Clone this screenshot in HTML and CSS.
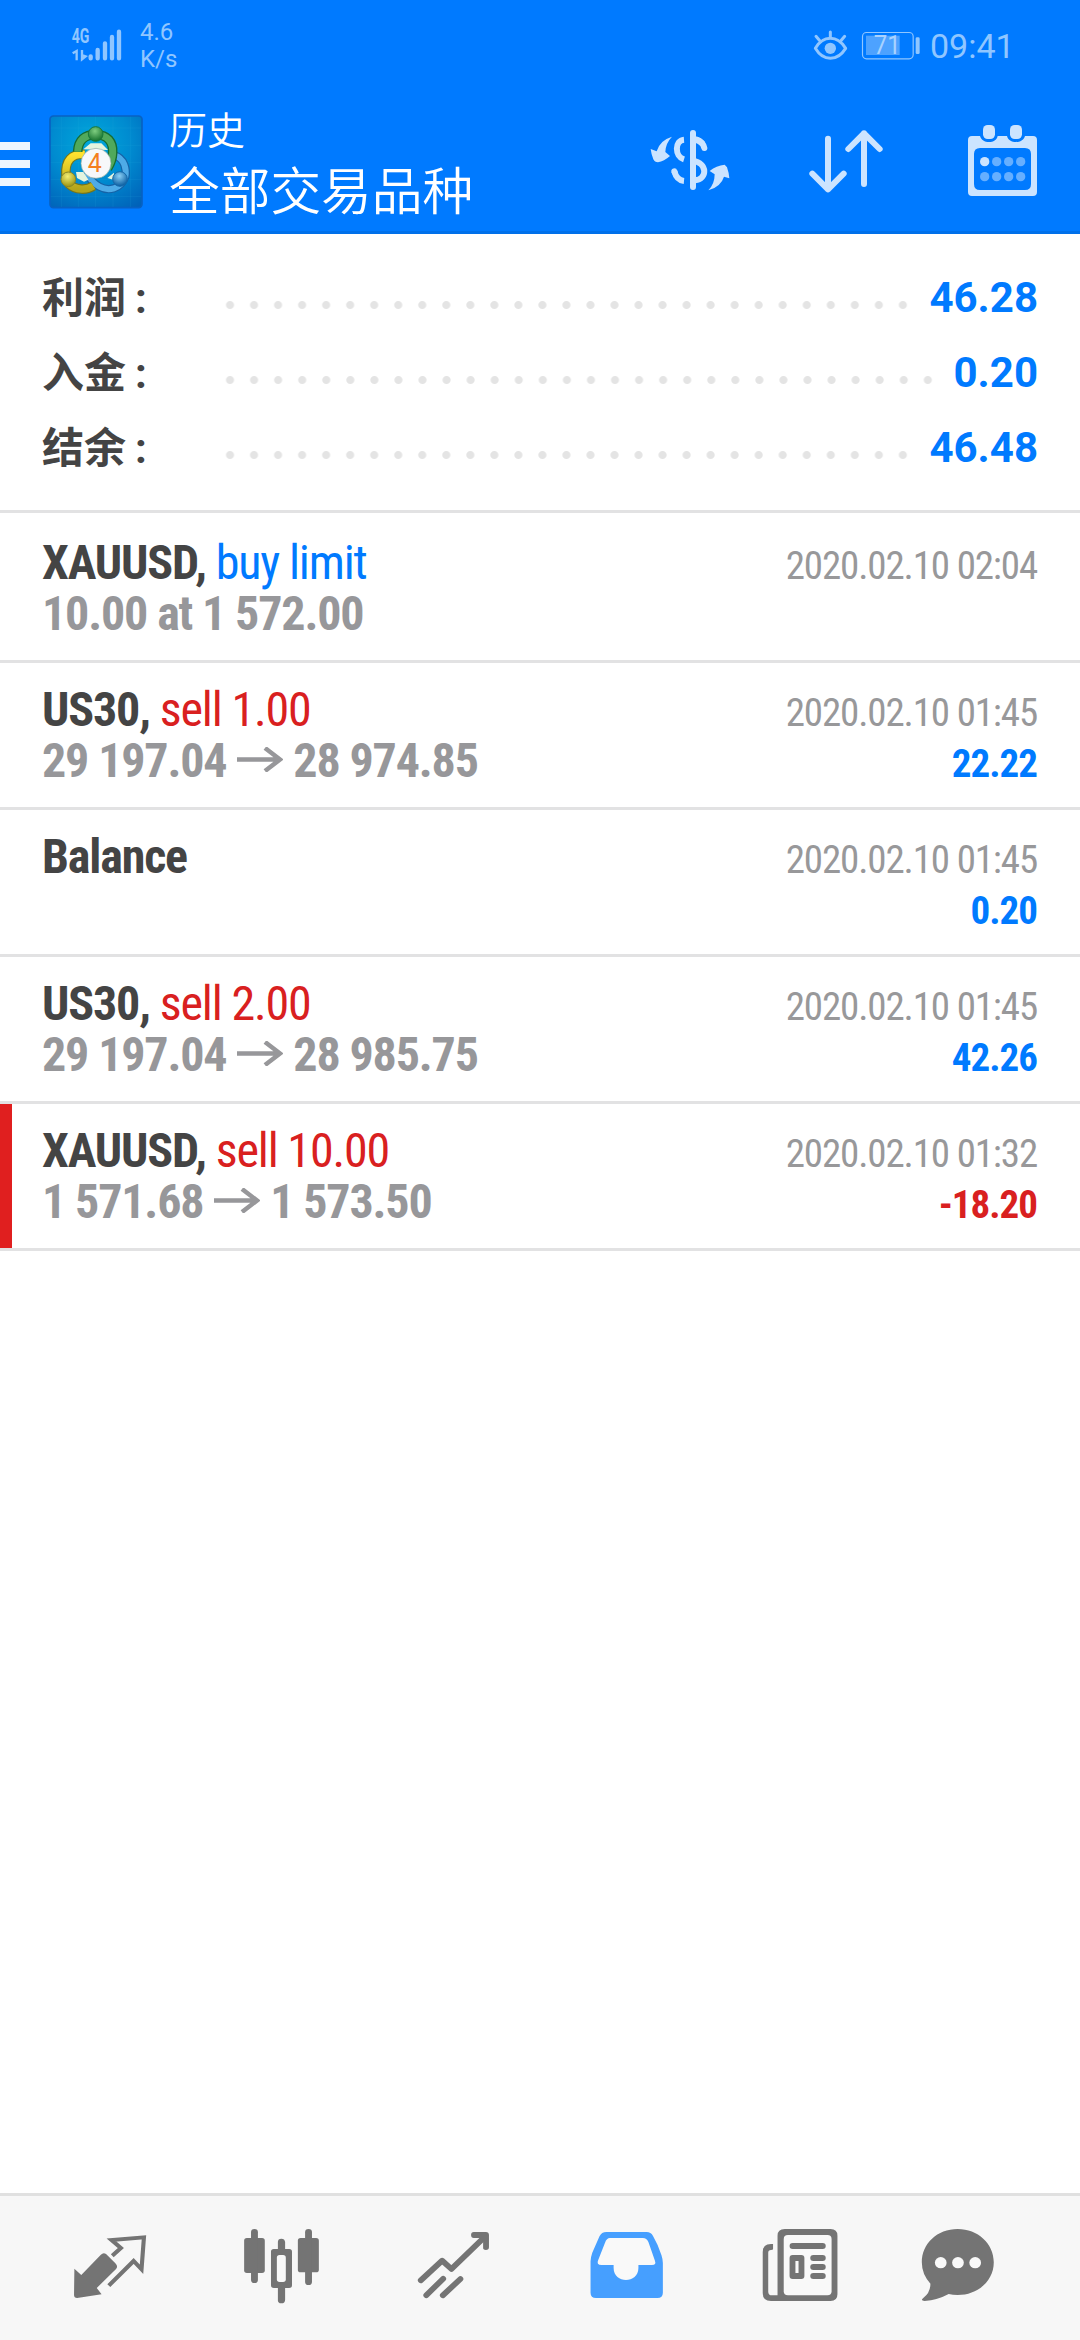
FILE: index.html
```html
<!DOCTYPE html>
<html lang="zh-CN">
<head>
<meta charset="utf-8">
<title>历史</title>
<link rel="stylesheet" href="styles.css">
</head>
<body>
<header class="header">
  <div class="status">
    <svg class="signal" viewBox="210 75 162 114">
      <text class="signal-text" x="215" y="129" textLength="53" lengthAdjust="spacingAndGlyphs">4G</text>
      <path class="soft-line" d="M218 160l12-7v28M246 150v28l11-9-11-4" stroke-width="7"/>
      <path class="soft-line" stroke-linecap="round" stroke-width="13" d="M272 169v6M293 150v25M315 130v45M336 111v64M357 95v80"/>
    </svg>
    <div class="speed"><div>4.6</div><div>K/s</div></div>
    <svg class="eye" viewBox="99 87 105 99">
      <path class="soft-line" stroke-width="9" stroke-linecap="round" stroke-linejoin="round" d="M106 145Q124 115 151 115T197 145Q178 175 151 175T106 145ZM151 96v18M108 109l12 14M194 109l-12 14"/>
      <circle class="soft-fill" cx="151" cy="145" r="17"/>
    </svg>
    <svg class="battery" viewBox="243 93 180 87">
      <rect class="soft-line" x="247.500" y="97.500" width="152" height="79" rx="12" stroke-width="3.500"/>
      <rect class="charge" x="258" y="107" width="101" height="58"/>
      <rect class="soft-fill" x="407" y="112" width="12" height="50" rx="4"/>
      <text class="battery-text" x="281" y="163" textLength="81" lengthAdjust="spacingAndGlyphs">71</text>
    </svg>
    <time class="clock">09:41</time>
  </div>
  <div class="bar">
    <div class="menu"><span></span><span></span><span></span></div>
    <svg class="logo" viewBox="147 345 282 282">
      <defs>
        <radialGradient id="tile" cx=".45" cy=".3" r=".85"><stop offset="0" stop-color="#00a9dc"/><stop offset=".5" stop-color="#008bd0"/><stop offset="1" stop-color="#0061b8"/></radialGradient>
        <radialGradient id="green" cx=".45" cy=".3" r=".7"><stop offset="0" stop-color="#7fce80"/><stop offset="1" stop-color="#14702c"/></radialGradient>
        <radialGradient id="gold" cx=".45" cy=".3" r=".7"><stop offset="0" stop-color="#f3ee72"/><stop offset="1" stop-color="#9c9412"/></radialGradient>
        <radialGradient id="azure" cx=".45" cy=".3" r=".7"><stop offset="0" stop-color="#8bd0f6"/><stop offset="1" stop-color="#075b9f"/></radialGradient>
        <linearGradient id="goldArc" x1="0" y1="0" x2="0" y2="1"><stop offset="0" stop-color="#ffe22f"/><stop offset="1" stop-color="#b4a51a"/></linearGradient>
      </defs>
      <rect x="150" y="348" width="276" height="275" rx="10" fill="url(#tile)" stroke="#0861c2" stroke-width="5"/>
      <path d="M184 350v271M235 350v271M287 350v271M339 350v271M391 350v271M152 384h272M152 436h272M152 487h272M152 539h272M152 590h272" stroke="#31aee0" stroke-opacity=".2" stroke-width="2"/>
      <path d="M343 466C375 475 380 510 376 530C362 568 325 575 298 560C276 548 268 532 258 520" fill="none" stroke="#1562a6" stroke-width="25"/>
      <path d="M343 466C375 475 380 510 376 530C362 568 325 575 298 560C276 548 268 532 258 520" fill="none" stroke="#4eabe7" stroke-width="18"/>
      <path d="M254 463C215 461 194 480 198 528M204 550C228 573 262 570 280 558" fill="none" stroke="#75751c" stroke-width="29"/>
      <path d="M254 463C215 461 194 480 198 528M204 550C228 573 262 570 280 558" fill="none" stroke="url(#goldArc)" stroke-width="22"/>
      <path d="M233 455C235 419 255 404 287 404C322 404 340 425 338 459C337 480 329 495 323 505" fill="none" stroke="#176c31" stroke-width="29"/>
      <path d="M233 455C235 419 255 404 287 404C322 404 340 425 338 459C337 480 329 495 323 505" fill="none" stroke="#50a95b" stroke-width="21"/>
      <path d="M250 448L272 430H304L324 450ZM228 516h22l15 23-13 6-21-11ZM322 534l20-16v22Z" fill="#e4f4df"/>
      <circle cx="287" cy="402" r="22" fill="url(#green)" stroke="#17783b" stroke-width="3"/>
      <circle cx="205" cy="538" r="22" fill="url(#gold)" stroke="#87862a" stroke-width="3"/>
      <circle cx="360" cy="537" r="22" fill="url(#azure)" stroke="#1469aa" stroke-width="3"/>
      <circle cx="288" cy="490" r="45" fill="#f7f8fa" stroke="#8ba79b" stroke-width="2"/>
      <text class="logo-text" x="263" y="515" textLength="42" lengthAdjust="spacingAndGlyphs">4</text>
    </svg>
    <div class="titles"><div class="title">历史</div><div class="subtitle">全部交易品种</div></div>
    <div class="actions">
      <svg class="action" viewBox="33 -30 468 432">
        <path class="icon-line" stroke-width="18" d="M252 119C224 121 223 169 252 178M223 214Q230 241 252 243"/>
        <path class="icon-line" stroke-width="18" stroke-linecap="round" d="M279 99V261M290 119Q308 125 313 144M223 214L224 217"/>
        <path class="icon-line" stroke-width="18" d="M279 119Q297 118 307 131M279 182C323 189 323 237 285 241"/>
        <path class="icon-fill" d="M216 110Q197 129 196 156L210 168Q192 184 174 187Q164 187 160 178Q154 164 152 147L170 154Q179 121 216 110ZM325 271Q344 252 344 223L329 213Q349 196 374 194L381 202Q387 219 388 235L372 230Q363 260 325 271Z"/>
      </svg>
      <svg class="action" viewBox="-39 270 468 432">
        <path class="icon-line" stroke-width="18" stroke-linecap="round" stroke-linejoin="round" d="M144 416V568M97 521L144 568L191 521M252 552V400M205 447L252 400L299 447"/>
      </svg>
      <svg class="action" viewBox="429 270 468 432">
        <path class="icon-fill" fill-rule="evenodd" d="M576 408H600C604 421 614 426 627 426S650 421 653 408H681C684 421 695 426 708 426S731 421 735 408H759Q771 408 771 420V576Q771 588 759 588H576Q564 588 564 576V420Q564 408 576 408ZM600 444Q582 444 582 462V552Q582 570 600 570H735Q753 570 753 552V462Q753 444 735 444Z"/>
        <rect class="icon-fill" x="609" y="375" width="36" height="42" rx="14"/><rect class="icon-fill" x="690" y="375" width="36" height="42" rx="14"/>
        <circle class="icon-fill" cx="614" cy="485" r="14"/>
        <g class="dim-fill"><circle cx="650" cy="485" r="14"/><circle cx="686" cy="485" r="14"/><circle cx="722" cy="485" r="14"/><circle cx="614" cy="530" r="14"/><circle cx="650" cy="530" r="14"/><circle cx="686" cy="530" r="14"/><circle cx="722" cy="530" r="14"/></g>
      </svg>
    </div>
  </div>
</header>

<main class="content">
  <section class="summary">
    <div class="total"><span class="label">利润 :</span><span class="dots"></span><span class="amount">46.28</span></div>
    <div class="total"><span class="label">入金 :</span><span class="dots"></span><span class="amount">0.20</span></div>
    <div class="total"><span class="label">结余 :</span><span class="dots"></span><span class="amount">46.48</span></div>
  </section>
  <section class="deals">
    <article class="deal">
      <div class="line"><div class="name"><b>XAUUSD,</b> <span class="buy">buy limit</span></div><time class="date">2020.02.10 02:04</time></div>
      <div class="line"><div class="price">10.00 at 1 572.00</div></div>
    </article>
    <article class="deal">
      <div class="line"><div class="name"><b>US30,</b> <span class="sell">sell 1.00</span></div><time class="date">2020.02.10 01:45</time></div>
      <div class="line"><div class="price">29 197.04 <svg class="arrow" viewBox="0 0 46 25"><path d="M0 12.500H43M28 1L43 12.500L28 24"/></svg> 28 974.85</div><div class="profit">22.22</div></div>
    </article>
    <article class="deal">
      <div class="line"><div class="name"><b>Balance</b></div><time class="date">2020.02.10 01:45</time></div>
      <div class="line"><div class="price">&nbsp;</div><div class="profit">0.20</div></div>
    </article>
    <article class="deal">
      <div class="line"><div class="name"><b>US30,</b> <span class="sell">sell 2.00</span></div><time class="date">2020.02.10 01:45</time></div>
      <div class="line"><div class="price">29 197.04 <svg class="arrow" viewBox="0 0 46 25"><path d="M0 12.500H43M28 1L43 12.500L28 24"/></svg> 28 985.75</div><div class="profit">42.26</div></div>
    </article>
    <article class="deal marked">
      <div class="line"><div class="name"><b>XAUUSD,</b> <span class="sell">sell 10.00</span></div><time class="date">2020.02.10 01:32</time></div>
      <div class="line"><div class="price">1 571.68 <svg class="arrow" viewBox="0 0 46 25"><path d="M0 12.500H43M28 1L43 12.500L28 24"/></svg> 1 573.50</div><div class="profit loss">-18.20</div></div>
    </article>
  </section>
</main>

<nav class="tabs">
  <svg class="tab" preserveAspectRatio="none" viewBox="69.700 48 499.500 432">
    <path d="M216 266L236 285L293 224Q300 216 308 222L335 250Q344 259 337 267L281 324L295 343L224 354Q215 354 215 345Z"/>
    <path class="tab-line" stroke-width="12" stroke-linejoin="miter" d="M326 227L351 204L324 180L418 172L411 268L388 243L316 317"/>
  </svg>
  <svg class="tab" preserveAspectRatio="none" viewBox="569.200 48 499.500 432">
    <rect x="709" y="174" width="60" height="105" rx="8"/><rect x="729" y="147" width="20" height="162" rx="10"/>
    <rect x="865" y="174" width="61" height="103" rx="8"/><rect x="886" y="147" width="20" height="168" rx="10"/>
    <path d="M807 207V186Q807 176 817 176T828 186V207H840Q848 207 848 215V316Q848 324 840 324H828V359Q828 370 817 370T807 359V324H795Q787 324 787 316V215Q787 207 795 207Z"/>
    <rect class="hole" x="804" y="225" width="26" height="81" rx="8"/>
  </svg>
  <svg class="tab" preserveAspectRatio="none" viewBox="1068.700 48 499.500 432">
    <path class="tab-line" stroke-width="17" stroke-linecap="round" stroke-linejoin="round" d="M1222 301L1284 242L1311 267L1405 173M1238 346L1287 296M1286 346L1337 297"/>
    <path d="M1376 156H1411Q1420 156 1420 165V202Q1420 210 1411 210T1403 202V183L1393 174H1376Q1368 174 1368 165T1376 156Z"/>
  </svg>
  <svg class="tab active" preserveAspectRatio="none" viewBox=".200 48 499.500 432">
    <path d="M147 244Q147 233 152 218L173 169Q179 156 193 156H310Q322 156 328 167Q344 195 353 226Q357 239 357 249V338Q357 354 341 354H163Q147 354 147 338Z"/>
    <path class="hole" d="M203 174H299Q310 174 315 186L334 242Q339 255 325 255H286V264C286 312 214 312 214 264V255H179Q163 255 169 241L189 188Q194 174 203 174Z"/>
  </svg>
  <svg class="tab" preserveAspectRatio="none" viewBox="499.700 48 499.500 432">
    <path d="M711 147H844Q864 147 864 167V343Q864 363 844 363H671Q647 363 647 339V216Q647 192 671 192H677V207Q677 210 671 210Q663 210 663 218V335Q663 346 674 346H690V167Q690 147 711 147Z"/>
    <rect class="hole" x="708" y="165" width="139" height="181" rx="12"/>
    <rect x="725" y="189" width="105" height="18" rx="9"/><rect x="785" y="225" width="45" height="18" rx="9"/><rect x="785" y="252" width="45" height="18" rx="9"/><rect x="785" y="279" width="45" height="18" rx="9"/>
    <rect x="725" y="225" width="43" height="72" rx="9"/><rect class="hole" x="742" y="243" width="9" height="36"/>
  </svg>
  <svg class="tab" preserveAspectRatio="none" viewBox="999.200 48 499.500 432">
    <path d="M1213 147C1272 147 1318 191 1318 247S1272 345 1213 345Q1199 345 1187 342Q1155 360 1117 363Q1103 362 1114 353Q1134 338 1134 311Q1109 283 1109 247C1109 191 1154 147 1213 147Z"/>
    <circle class="hole" cx="1164" cy="248" r="17"/><circle class="hole" cx="1214" cy="248" r="17"/><circle class="hole" cx="1264" cy="248" r="17"/>
  </svg>
</nav>
</body>
</html>
```
FILE: styles.css
```css
* { box-sizing: border-box; }

body {
  margin: 0;
  height: 2340px;
  display: flex;
  flex-direction: column;
  background: #fff;
  font-family: Roboto, "Noto Sans CJK SC", sans-serif;
}

svg { display: block; flex: none; }

.header {
  height: 234px;
  flex: none;
  background: #007aff;
  border-bottom: 3px solid #0070ea;
  color: #fff;
}

.status {
  height: 90px;
  display: flex;
  align-items: flex-start;
  padding: 0 66px 0 70px;
  color: #90c6ff;
}

.signal { width: 54px; height: 38px; margin-top: 25px; overflow: visible; }
.signal-text { font: 700 58px Roboto, sans-serif; fill: #90c6ff; }
.soft-line { fill: none; stroke: #90c6ff; }
.soft-fill { fill: #90c6ff; }
.speed { margin: 19px 0 0 16px; font-size: 24px; line-height: 27px; }
.eye { width: 35px; height: 33px; margin: 29px 0 0 auto; }
.battery { width: 60px; height: 29px; margin: 31px 0 0 13px; }
.charge { fill: #4da2ff; }
.battery-text { font: 400 76px Roboto, sans-serif; fill: #a8d2ff; }
.clock { width: 93px; padding-left: 9px; margin-top: 26px; font-size: 34px; line-height: 40px; }

.bar { height: 141px; display: flex; align-items: flex-start; }
.menu { width: 30px; margin: 52px 19px 0 0; display: grid; gap: 10px; }
.menu span { height: 8px; background: #eef6ff; }
.logo { width: 94px; height: 94px; margin-top: 25px; }
.logo-text { font: 400 78px Roboto, sans-serif; fill: #f4801f; }
.titles { margin: 16px 0 0 26px; white-space: nowrap; font-weight: 350; }
.title { font-size: 38px; line-height: 50px; }
.subtitle { font-size: 50.7px; line-height: 73px; }
.actions { display: flex; margin-left: auto; padding-right: 1px; }
.action { width: 156px; height: 144px; }
.icon-line { fill: none; stroke: #cce4ff; }
.icon-fill { fill: #cce4ff; }
.dim-fill { fill: #66afff; }

.content { flex: 1; }
.summary { height: 279px; padding: 26px 42px 0; border-bottom: 3px solid #e2e2e3; }
.total { height: 75px; display: flex; line-height: 75px; font-size: 42px; font-weight: 700; }
.label { width: 176px; padding-top: 1px; color: #444; word-spacing: -1.5px; }
.dots {
  flex: 1;
  height: 10px;
  margin: 40px 14px 0 0;
  background: radial-gradient(circle, #e4e4e4 3.500px, transparent 4.500px) 0 0 / 24px 10px space no-repeat;
}
.amount { color: #007aff; }

.deals { padding-top: 3px; font-family: "Roboto Condensed", Roboto, sans-serif; font-stretch: 75%; }
.deal { height: 147px; padding: 21px 42px 0; border-bottom: 3px solid #e2e2e3; }
.marked { box-shadow: inset 12px 0 #e01f1f; }
.line { height: 51px; display: flex; align-items: baseline; justify-content: space-between; font-size: 48px; line-height: 51px; letter-spacing: -1.15px; white-space: nowrap; }
.name { color: #444; }
.buy { color: #007aff; }
.sell { color: #d9201f; }
.price { color: #97979a; font-weight: 700; }
.date, .profit { margin-right: 1px; font-size: 39px; }
.date { color: #98989a; }
.profit { color: #007aff; font-weight: 700; letter-spacing: -1px; }
.profit.loss { color: #d9201f; }
.arrow { display: inline-block; width: 46px; height: 25px; margin-left: 1px; vertical-align: 5px; }
.arrow path { fill: none; stroke: #97979a; stroke-width: 4.500; }

.tabs { height: 147px; flex: none; display: flex; padding: 0 24px; background: #f7f7f7; border-top: 3px solid #e0e0e0; }
.tab { width: 172px; height: 144px; fill: #747474; }
.tab-line { fill: none; stroke: #747474; }
.active { fill: #469fff; }
.hole { fill: #f9f9f9; }
```
